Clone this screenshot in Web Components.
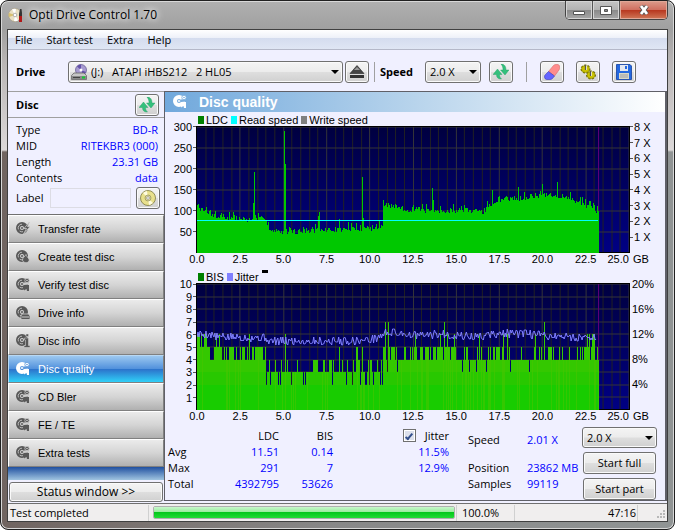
<!DOCTYPE html>
<html lang="en">
<head>
<meta charset="utf-8">
<title>Opti Drive Control 1.70</title>
<style>
    body {
        margin: 0;
        font: 11px/16px "Open Sans", "Liberation Sans", sans-serif;
        color: #000;
    }
</style>
</head>
<body>
<odc-window></odc-window>

<script>
const CONTROL_CSS = `
    *, *::before, *::after { box-sizing: border-box; }
    button, select, input { font: inherit; color: inherit; margin: 0; }
    button, select {
        border: 1px solid #707070;
        border-radius: 3px;
        background: linear-gradient(#f4f4f4, #ececec 48%, #dedede 52%, #d0d0d0);
        box-shadow: inset 0 0 0 1px #fafafa;
    }
`;

// the disc that most of the navigation icons are built on
const DISC = `<path fill="currentColor" fill-rule="evenodd" d="M7 1a6 6 0 1 0 0 12a6 6 0 1 0 0-12zM7 5a2 2 0 1 1 0 4a2 2 0 1 1 0-4z"/>
    <path fill="none" stroke="#fff" stroke-opacity=".65" stroke-width=".9" d="M3.4 8.4A3.8 3.8 0 0 1 7 3.2M4.6 10A3.8 3.8 0 0 0 8 10.7"/>
    <circle cx="7" cy="7" r="1" fill="currentColor"/>`;

const ICONS = {
    transfer: DISC + `<path fill="currentColor" stroke="var(--edge, #ccc)" stroke-width=".8" d="M14.500 1L9 7.500h2.500L8 14l7-8.500h-2.500z"/>`,
    create: DISC + `<path fill="currentColor" stroke="var(--edge, #ccc)" stroke-width=".8" d="M11 5.500c-1 2-3.500 3-3.500 5.500s5 4 6.500 1c1-2-2-3.500-3-6.500z"/>`,
    verify: DISC + `<path fill="var(--edge, #ccc)" d="M8.500 5.500L14 5v2.500l-5 .5z"/><circle cx="12" cy="3.500" r="2.200" fill="currentColor" stroke="var(--edge, #ccc)" stroke-width=".8"/><circle cx="12" cy="3.500" r=".8" fill="var(--edge, #ccc)"/>
        <path fill="currentColor" d="M9.500 8H14v6h-2l-.5-2-2.500 1.500z"/>`,
    drive: DISC + `<path fill="currentColor" stroke="var(--edge, #ccc)" stroke-width=".8" d="M7 9h6.500l1.500 2v3.500H6V11z"/><path stroke="#ccc" d="M7 12h7"/>`,
    info: DISC + `<path fill="currentColor" stroke="var(--edge, #ccc)" stroke-width=".6" d="M11 1h2.500v2.500H11zM9.500 5h4v7.500H15v2H9v-2h1.500V7h-1z"/>`,
    app: `<circle cx="7" cy="8" r="6.500" fill="#e8e0c4" stroke="#a89c80" stroke-width=".6"/>
        <path fill="#fff" d="M7 8L4 2.300A6 6 0 0 1 8 2zM7 8l3 5.500A6 6 0 0 1 6 14z"/><path fill="#d8c070" d="M7 8L1 6a6 6 0 0 0 0 4z"/>
        <circle cx="7" cy="8" r="1.800" fill="#fff" stroke="#999" stroke-width=".7"/>
        <path fill="#333" d="M12 2h1.500l.5 4v9h-3V7z"/><path fill="#b01818" d="M11 9h3v6h-3z"/>`,
    optical: `<circle cx="10" cy="6" r="5.500" fill="#a79bd0" stroke="#6c6298" stroke-width=".8"/><path fill="#6350a8" d="M10 6L6 2.500a5.500 5.500 0 0 1 4-2zM10 6l5 2a5.500 5.500 0 0 1-3 3z"/>
        <circle cx="10" cy="6" r="1.500" fill="#fff"/>
        <path fill="#c6c6c6" stroke="#666" stroke-width=".8" d="M3 9h10l2.500 2.500v4H.5v-4z"/><path fill="#8a8a8a" d="M1 12h14v3H1z"/><path fill="#444" d="M2 13h7v1H2z"/><path fill="#1c3" d="M11 12.500h3v2h-3z"/>`,
    eject: `<path fill="#444" stroke="#222" stroke-width=".6" d="M8 1.500L15 9.500H1z"/><path fill="#333" d="M1 11h14v3H1z"/><path fill="#999" d="M8 3l3 3H5z"/>`,
    refresh: `<path fill="#34c07c" stroke="#1f9a60" stroke-width=".4" d="M0 10.500L4.500 5l4.500 5.500H6.500c0 2 .5 3 2 4.500-3.500.2-5-1.500-5-4.500zM16 6l-4 5-4.500-5H10c0-2.500-.5-4-2-6 3.500 0 5 2.500 5 6z"/>`,
    eraser: `<path fill="#ff8c8c" stroke="#d86868" stroke-width=".6" d="M4.500 7.500L9.500 1.500q1-1 2.500-1h2q1.700.5 1.700 2.500T15 6l-4.500 6z"/>
        <path fill="#6464ff" stroke="#3c3cb8" stroke-width=".6" d="M4.500 7.500l6 4.500-2 2.500q-1 1-2.500 1H2.500Q.5 15 .5 13t1-2.500z"/>`,
    gears: `<g fill="#ccc400" stroke="#8a8400"><path fill="none" stroke="#6a6600" stroke-width="2" stroke-dasharray="2 1.300" d="M1.500 5a4 3.500 0 1 0 8 0a4 3.500 0 1 0-8 0zM7 11a4 3.500 0 1 0 8 0a4 3.500 0 1 0-8 0z"/>
        <ellipse cx="5.500" cy="5" rx="4" ry="3.500" stroke-width=".6"/><ellipse cx="11" cy="11" rx="4" ry="3.500" stroke-width=".6"/></g>
        <path stroke="#555" stroke-width="1.300" d="M5.500 1v5M10.500 7v5"/><path stroke="#eee" stroke-width=".8" d="M6.500 1.500v4.500M11.500 7.500V12"/>`,
    save: `<path fill="#2468e0" stroke="#1440a0" stroke-width=".8" d="M.5.5H14L15.500 2v13.500H.5z"/><path fill="#e4e8f0" d="M4 1h8v6H4z"/><path fill="#2468e0" d="M9 2h2v3H9z"/>
        <path fill="#d8d8c8" d="M3 9h10v6H3z"/><path stroke="#889" stroke-width=".7" d="M4 11h8M4 13h8"/>`,
    disc: `<circle cx="8" cy="8" r="7.500" fill="#e8e08c" stroke="#7c7840" stroke-width=".8"/><path fill="#fffce0" d="M8 8L3 3a7 7 0 0 1 4-2zM8 8l5 5a7 7 0 0 1-4 2z"/>
        <circle cx="8" cy="8" r="3" fill="#d8d4a0" stroke="#87834c" stroke-width=".6"/><circle cx="8" cy="8" r="1.300" fill="#fff" stroke="#777" stroke-width=".5"/>`,
};

class OdcIcon extends HTMLElement {
    connectedCallback() {
        const name = this.getAttribute("name");
        const size = this.getAttribute("size") || 16;
        const box = ICONS[name].startsWith(DISC) ? "1 1 14 14" : "0 0 16 16";
        this.attachShadow({ mode: "open" }).innerHTML = `
            <style>:host { display: flex; flex: none; } svg { display: block; }</style>
            <svg width="${size}" height="${size}" viewBox="${box}" aria-hidden="true">${ICONS[name]}</svg>`;
    }
}

class OdcIconButton extends HTMLElement {
    connectedCallback() {
        this.attachShadow({ mode: "open" }).innerHTML = `
            <style>
                ${CONTROL_CSS}
                :host { display: block; flex: none; width: 24px; height: 22px; }
                button { display: flex; align-items: center; justify-content: center; width: 100%; height: 100%; padding: 0; }
            </style>
            <button type="button" aria-label="${this.getAttribute("label")}"><odc-icon name="${this.getAttribute("icon")}"></odc-icon></button>`;
    }
}

class OdcSelect extends HTMLElement {
    connectedCallback() {
        const icon = this.getAttribute("icon");
        this.attachShadow({ mode: "open" }).innerHTML = `
            <style>
                ${CONTROL_CSS}
                :host { display: grid; grid-template-columns: auto 1fr auto; align-items: center; height: 22px; }
                select { grid-area: 1 / 1 / 2 / 4; width: 100%; height: 100%; appearance: none; padding: 0 16px 0 ${icon ? 22 : 4}px; }
                odc-icon { grid-area: 1 / 1; margin-left: 3px; pointer-events: none; }
                .arrow { grid-area: 1 / 3; margin-right: 4px; pointer-events: none; }
            </style>
            <select aria-label="${this.getAttribute("label")}"><option>${this.getAttribute("value")}</option></select>
            ${icon ? `<odc-icon name="${icon}"></odc-icon>` : ""}
            <svg class="arrow" width="8" height="4"><path d="M0 0h8L4 4z"/></svg>`;
    }
}

class OdcTitlebar extends HTMLElement {
    connectedCallback() {
        this.attachShadow({ mode: "open" }).innerHTML = `
            <style>
                ${CONTROL_CSS}
                :host { display: flex; flex: none; align-items: flex-start; height: 28px; }
                odc-icon { margin: 6px 5px 0 1px; }
                h1 { flex: 1; margin: 5px 0 0; font-size: 12px; line-height: 18px; font-weight: normal; text-shadow: 0 0 6px #fff, 0 0 8px #fff; }
                .buttons { display: flex; border: 1px solid #444; border-top: 0; border-radius: 0 0 5px 5px; overflow: hidden; }
                button { display: flex; align-items: center; justify-content: center; height: 18px; width: 27px; padding: 0; border: 0; border-radius: 0;
                    border-right: 1px solid #555; background: linear-gradient(#c4c4c4, #b2b2b2 48%, #8a8a8a 52%, #a8a8a8); box-shadow: inset 0 0 0 1px #d4d4d4; }
                .close { width: 47px; border-right: 0; background: linear-gradient(#dc9c8c, #d07060 48%, #b83820 52%, #d07858); box-shadow: inset 0 0 0 1px #e0a898; }
            </style>
            <odc-icon name="app"></odc-icon>
            <h1><slot></slot></h1>
            <div class="buttons">
                <button type="button" aria-label="Minimize"><svg width="14" height="12"><path fill="#fff" stroke="#555" d="M1.500 7.500h11v3h-11z"/></svg></button>
                <button type="button" aria-label="Maximize"><svg width="12" height="11"><path fill="#fff" fill-rule="evenodd" stroke="#555" d="M.5 1.500h11v8H.5zM4.500 4.500h3v2h-3z"/></svg></button>
                <button type="button" class="close" aria-label="Close"><svg width="14" height="12"><path fill="none" stroke="#555" stroke-width="4.500" d="M4 2l6 8M10 2l-6 8"/><path fill="none" stroke="#fff" stroke-width="2.800" d="M4 2l6 8M10 2l-6 8"/></svg></button>
            </div>`;
    }
}

class OdcMenubar extends HTMLElement {
    connectedCallback() {
        const items = ["File", "Start test", "Extra", "Help"];
        this.attachShadow({ mode: "open" }).innerHTML = `
            <style>
                :host { display: block; flex: none; }
                nav { display: flex; gap: 14px; height: 19px; padding: 0 7px; border-bottom: 1px solid #b4b8c8; background: linear-gradient(#fff, #eef1f9 40%, #d4dcee 42%, #dfe6f4); }
                button { border: 0; padding: 0; background: none; font: inherit; }
            </style>
            <nav>${items.map((item) => `<button type="button">${item}</button>`).join("")}</nav>`;
    }
}

class OdcToolbar extends HTMLElement {
    connectedCallback() {
        this.attachShadow({ mode: "open" }).innerHTML = `
            <style>
                :host { display: flex; flex: none; box-sizing: border-box; align-items: center; height: 41px; padding: 2px 31px 0 8px; }
                b { flex: none; }
                .drive { width: 52px; }
                .speed { width: 45px; }
                .drives { flex: 1; margin-right: 2px; }
                .speeds { width: 56px; margin-right: 8px; }
                .line { width: 1px; height: 20px; background: #a0a0a0; }
                .line.first { margin: 0 5px; }
                .line.second { margin: 0 13px; }
                .tools { display: flex; gap: 12px; }
            </style>
            <b class="drive">Drive</b>
            <odc-select class="drives" icon="optical" label="Drive" value="(J:)&nbsp;&nbsp; ATAPI iHBS212&nbsp;&nbsp; 2 HL05"></odc-select>
            <odc-icon-button icon="eject" label="Eject"></odc-icon-button>
            <span class="line first"></span>
            <b class="speed">Speed</b>
            <odc-select class="speeds" label="Speed" value="2.0 X"></odc-select>
            <odc-icon-button icon="refresh" label="Refresh drive"></odc-icon-button>
            <span class="line second"></span>
            <div class="tools">
                <odc-icon-button icon="eraser" label="Erase"></odc-icon-button>
                <odc-icon-button icon="gears" label="Options"></odc-icon-button>
                <odc-icon-button icon="save" label="Save"></odc-icon-button>
            </div>`;
    }
}

class OdcDiscInfo extends HTMLElement {
    connectedCallback() {
        const rows = [["Type", "BD-R"], ["MID", "RITEKBR3 (000)"], ["Length", "23.31 GB"], ["Contents", "data"]];
        this.attachShadow({ mode: "open" }).innerHTML = `
            <style>
                ${CONTROL_CSS}
                :host { display: block; }
                header { display: flex; align-items: center; justify-content: space-between; height: 27px; padding: 0 5px 0 8px;
                    border-top: 1px solid #a0a0a0; border-bottom: 1px solid #a0a0a0; }
                h2 { margin: 0; font-size: 11px; }
                dl { margin: 4px 6px 0 8px; }
                dl div { display: flex; justify-content: space-between; height: 16px; }
                dd { margin: 0; color: #00f; }
                .label { display: flex; align-items: center; gap: 5px; padding: 1px 4px 5px 8px; }
                .label label { width: 29px; }
                input { flex: 1; min-width: 0; height: 20px; border: 1px solid #dcdce4; background: #f0f0ff; }
            </style>
            <header><h2>Disc</h2><odc-icon-button icon="refresh" label="Refresh disc"></odc-icon-button></header>
            <dl>${rows.map(([name, value]) => `<div><dt>${name}</dt><dd>${value}</dd></div>`).join("")}</dl>
            <div class="label"><label for="label">Label</label><input id="label" type="text"><odc-icon-button icon="disc" label="Read label"></odc-icon-button></div>`;
    }
}

class OdcNav extends HTMLElement {
    connectedCallback() {
        const items = [
            ["transfer", "Transfer rate"], ["create", "Create test disc"], ["verify", "Verify test disc"],
            ["drive", "Drive info"], ["info", "Disc info"], ["verify", "Disc quality"],
            ["verify", "CD Bler"], ["verify", "FE / TE"], ["verify", "Extra tests"],
        ];
        this.attachShadow({ mode: "open" }).innerHTML = `
            <style>
                :host { display: flex; flex-direction: column; flex: 1; border-top: 1px solid #707070; }
                nav { display: flex; flex-direction: column; }
                button { display: flex; align-items: center; gap: 8px; height: 28px; padding: 0 7px; border: 1px solid; border-color: #fff #808080 #808080 #fff;
                    background: linear-gradient(#ebebeb, #d4d4d4 50%, #b0b0b0); font: 11px "Liberation Sans", sans-serif; color: #000; }
                odc-icon { color: #585858; }
                .on { background: linear-gradient(#9cc8f0, #5090dc 50%, #2c74cc 52%, #30d0f8); color: #fff; border-color: #b8d8f4 #808080 #808080 #b8d8f4; }
                .on odc-icon { color: #fff; --edge: #5c98dc; }
                .fill { flex: 1; background: linear-gradient(#2050a0, #a0c4e0); }
            </style>
            <nav>${items.map(([icon, text]) => `<button type="button"${text === "Disc quality" ? ' class="on"' : ""}><odc-icon name="${icon}" size="14"></odc-icon>${text}</button>`).join("")}</nav>
            <div class="fill"></div>`;
    }
}

const PLOT_WIDTH = 433;
const PLOT_HEIGHT = 126;
const LAST_X = 403;

function randomSource(seed) {
    return () => {
        seed = (seed * 1664525 + 1013904223) % 4294967296;
        return seed / 4294967296;
    };
}

function interpolate(points, x) {
    let i = 1;
    while (i < points.length - 1 && points[i][0] < x) i++;
    const [x0, y0] = points[i - 1];
    const [x1, y1] = points[i];
    return y0 + (y1 - y0) * (x - x0) / (x1 - x0);
}

function bars(values, max, limit = Infinity) {
    return values.map((value, x) => {
        const height = Math.round(Math.min(value, limit) / max * PLOT_HEIGHT);
        return `M${x} ${PLOT_HEIGHT}v-${height}h1v${height}z`;
    }).join("");
}

function ldcValues() {
    const random = randomSource(7);
    const base = [[0, 104], [12, 96], [20, 86], [40, 82], [55, 78], [69, 83], [71, 62], [74, 52], [100, 50], [120, 54], [185, 60],
        [186, 114], [198, 112], [210, 101], [222, 104], [240, 98], [265, 102], [287, 98], [295, 116], [302, 127], [322, 130],
        [345, 138], [365, 135], [385, 121], [395, 106], [403, 94]];
    const spikes = { 0: 115, 56: 118, 57: 192, 87: 291, 88: 213, 121: 88, 122: 98, 142: 80, 165: 182, 166: 84, 186: 127,
        236: 155, 237: 126, 296: 150, 322: 157, 346: 164, 361: 169 };
    const values = [];
    for (let x = 0; x < LAST_X; x++) {
        const noise = random() * 12 - 6 + (random() > 0.85 ? 11 : 0);
        values.push(spikes[x] || interpolate(base, x) + noise);
    }
    return values;
}

function bisValues() {
    const random = randomSource(31);
    // [end, usual level, chance of one above, of two above, of one below]
    const parts = [[13, 5, 0.5, 0, 0], [17, 4, 0, 0, 0], [25, 5, 0.3, 0, 0], [56, 4, 0.45, 0, 0], [69, 5, 0, 0, 0.25], [186, 3, 0.25, 0, 0.1],
        [226, 4, 0.45, 0.04, 0.03], [259, 4, 0.5, 0.1, 0.06], [297, 4, 0.18, 0.02, 0.15], [305, 5, 0.3, 0, 0.2], [380, 4, 0.22, 0.07, 0.06], [403, 4, 0.4, 0.15, 0.03]];
    const spikes = { 52: 6, 88: 6, 142: 5, 159: 5, 160: 5, 165: 5, 186: 5, 187: 5, 188: 7, 191: 7, 248: 7, 348: 7, 402: 4 };
    const values = [];
    for (let x = 0; x < LAST_X; x++) {
        const [, level, up, twoUp, down] = parts.find(([end]) => x < end);
        const roll = random();
        let value = level;
        if (roll < twoUp) value += 2;
        else if (roll < twoUp + up) value += 1;
        else if (roll > 1 - down) value -= 1;
        values.push(spikes[x] || value);
    }
    return values;
}

function jitterPath() {
    const random = randomSource(5);
    const base = [[0, 6], [14, 6], [20, 5.8], [69, 5.75], [73, 5.45], [165, 5.5], [180, 5.7], [190, 6.15], [205, 6.1], [220, 5.9], [245, 6], [280, 5.8],
        [300, 6.05], [325, 6.05], [345, 5.95], [380, 5.75], [400, 5.85]];
    let path = "";
    for (let x = 0; x <= 400; x++) {
        const value = interpolate(base, x) + (random() - 0.5) * 0.7;
        path += `${x ? "L" : "M"}${x} ${Math.round(PLOT_HEIGHT - value / 10 * PLOT_HEIGHT)}`;
    }
    return path;
}

function stripes(values) {
    const random = randomSource(11);
    return values.map((value, x) => random() > 0.8 ? `M${x} ${PLOT_HEIGHT}v-${Math.round(value / 10 * PLOT_HEIGHT)}h1V${PLOT_HEIGHT}z` : "").join("");
}

function gridLines(rows) {
    let minor = "";
    let major = "";
    for (let i = 1; i <= 50; i++) {
        const line = `M${Math.round(i * PLOT_WIDTH / 50)} 0v${PLOT_HEIGHT}`;
        if (i % 5) minor += line;
        else major += line;
    }
    for (let i = 0; i < rows; i++) major += `M0 ${Math.round(i * PLOT_HEIGHT / rows)}h${PLOT_WIDTH}`;
    return `<path stroke="#202024" d="${minor}"/><path stroke="#343438" d="${major}"/>`;
}

// left and right are comma separated axis labels, top to bottom; the zero line has none
class OdcChart extends HTMLElement {
    connectedCallback() {
        const left = this.getAttribute("left").split(",");
        const right = this.getAttribute("right").split(",");
        const gb = ["0.0", "2.5", "5.0", "7.5", "10.0", "12.5", "15.0", "17.5", "20.0", "22.5"];
        const labels = (list) => list.map((text) => `<span>${text}</span>`).join("");
        this.attachShadow({ mode: "open" }).innerHTML = `
            <style>
                :host { display: grid; grid-template-columns: 31px 1fr 35px; font: 11px/12px "Liberation Sans", sans-serif; }
                .legend { grid-column: 2 / 4; display: flex; align-items: center; gap: 3px; height: 13px; padding-left: 2px; }
                .axis { display: flex; flex-direction: column; height: 126px; }
                .axis span { flex: 1; display: flex; align-items: center; gap: 1px; }
                .axis.left span { justify-content: flex-end; }
                .left span::after, .right.ticks span::before { content: ""; width: 3px; height: 1px; background: #555; }
                .right:not(.ticks) span { padding-left: 2px; }
                .plot { border: 1px solid #000; border-bottom: 0; }
                .plot svg { display: block; width: 100%; height: 126px; shape-rendering: crispEdges; }
                .gb { grid-column: 2; display: flex; justify-content: space-between; height: 14px; padding: 0 1px; }
                .gb span { display: flex; justify-content: center; width: 0; white-space: nowrap; }
                .gb .end { justify-content: flex-end; }
                .unit { padding-left: 3px; }
            </style>
            <div class="legend"><slot></slot></div>
            <div class="axis left" style="margin-top: -${Math.round(63 / left.length) - 1}px">${labels(left)}</div>
            <div class="plot">${this.plot()}</div>
            <div class="axis right${right.length > 5 ? " ticks" : ""}" style="margin-top: -${Math.round(63 / right.length) - 1}px">${labels(right)}</div>
            <div class="gb">${labels(gb)}<span class="end">25.0</span></div>
            <div class="unit">GB</div>`;
    }
    plot() {
        const rows = this.getAttribute("left").split(",").length;
        return `<svg viewBox="0 0 ${PLOT_WIDTH} ${PLOT_HEIGHT}" preserveAspectRatio="none">
            <defs><linearGradient id="bg" x2="0" y2="1"><stop stop-color="#000040"/><stop offset="1" stop-color="#000084"/></linearGradient></defs>
            <rect width="${PLOT_WIDTH}" height="${PLOT_HEIGHT}" fill="url(#bg)"/>
            ${gridLines(rows)}
            <path stroke="#000" d="M0 125.500h${PLOT_WIDTH}"/>
            <path stroke="#600078" d="M402.500 0v${PLOT_HEIGHT}"/>
            ${this.getAttribute("series") === "ldc" ? this.ldc() : this.bis()}
        </svg>`;
    }
    ldc() {
        return `<path fill="#00c800" d="${bars(ldcValues(), 300)}"/><path stroke="#0ff" d="M0 93.500h402"/>`;
    }
    bis() {
        const values = bisValues();
        return `<path fill="#34c800" d="${bars(values, 10)}"/>
            <path fill="#28c800" d="${bars(values, 10, 3)}"/>
            <path fill="#18cc00" d="${bars(values, 10, 2)}"/>
            <path fill="#48c400" fill-opacity=".6" d="${stripes(values)}"/>
            <path fill="none" stroke="#8080ff" d="${jitterPath()}"/>`;
    }
}

class OdcLegend extends HTMLElement {
    connectedCallback() {
        this.attachShadow({ mode: "open" }).innerHTML = `
            <style>
                :host { display: flex; align-items: center; gap: 2px; }
                i { width: 6px; height: 8px; background: ${this.getAttribute("color")}; }
            </style>
            <i></i><slot></slot>`;
    }
}

class OdcResults extends HTMLElement {
    connectedCallback() {
        this.attachShadow({ mode: "open" }).innerHTML = `
            <style>
                ${CONTROL_CSS}
                :host { display: flex; padding: 3px 8px 0 3px; }
                table { align-self: flex-start; border-collapse: collapse; table-layout: fixed; width: 281px; }
                th, td { padding: 0; height: 16px; font-weight: normal; text-align: right; }
                thead th { height: 17px; }
                tbody th { text-align: left; }
                td, dd { color: #00f; }
                .check { display: flex; align-items: center; justify-content: flex-end; gap: 9px; }
                input { appearance: none; width: 13px; height: 13px; border: 1px solid #707070; box-shadow: inset 0 0 0 1px #fff;
                    background: #dce0ec; display: grid; place-items: center; }
                input:checked::before { content: ""; width: 4px; height: 8px; border: solid #34508c; border-width: 0 2px 2px 0; transform: rotate(40deg); }
                dl { display: grid; grid-template: 28px 16px 16px / 59px auto; margin: 5px 0 0 19px; }
                dd { margin: 0; white-space: nowrap; }
                .actions { display: flex; flex-direction: column; gap: 4px; width: 75px; margin-left: auto; }
                .actions button { height: 22px; margin: 0 1px; padding: 0; }
                .actions odc-select { height: 21px; }
            </style>
            <table>
                <colgroup><col style="width: 50px"><col style="width: 61px"><col style="width: 54px"><col></colgroup>
                <thead><tr><td></td><th scope="col">LDC</th><th scope="col">BIS</th><th scope="col"><span class="check"><input id="jitter" type="checkbox" checked><label for="jitter">Jitter</label></span></th></tr></thead>
                <tbody>
                    <tr><th scope="row">Avg</th><td>11.51</td><td>0.14</td><td>11.5%</td></tr>
                    <tr><th scope="row">Max</th><td>291</td><td>7</td><td>12.9%</td></tr>
                    <tr><th scope="row">Total</th><td>4392795</td><td>53626</td><td></td></tr>
                </tbody>
            </table>
            <dl><dt>Speed</dt><dd>2.01 X</dd><dt>Position</dt><dd>23862 MB</dd><dt>Samples</dt><dd>99119</dd></dl>
            <div class="actions">
                <odc-select label="Test speed" value="2.0 X"></odc-select>
                <button type="button">Start full</button>
                <button type="button">Start part</button>
            </div>`;
    }
}

class OdcQualityPanel extends HTMLElement {
    connectedCallback() {
        this.attachShadow({ mode: "open" }).innerHTML = `
            <style>
                :host { display: flex; flex-direction: column; flex: 1; min-width: 0; margin-bottom: 2px; border: 1px solid #606068; border-right-width: 2px; }
                header { display: flex; align-items: center; gap: 12px; height: 20px; padding-left: 8px; background: linear-gradient(90deg, #70a8dc, #b8d4ec 50%, #fff); color: #fff; }
                header odc-icon { --edge: #78acdc; }
                h2 { margin: 0; font: bold 14px/20px "Liberation Sans", sans-serif; }
                .mark { align-self: flex-start; width: 6px; height: 3px; background: #000; }
                odc-chart { margin-top: 1px; }
                odc-chart + odc-chart { margin-top: 3px; }
            </style>
            <header><odc-icon name="verify" size="14"></odc-icon><h2>Disc quality</h2></header>
            <odc-chart series="ldc" left="300,250,200,150,100,50" right="8 X,7 X,6 X,5 X,4 X,3 X,2 X,1 X">
                <odc-legend color="#008000">LDC</odc-legend><odc-legend color="#00ffff">Read speed</odc-legend><odc-legend color="#808080">Write speed</odc-legend>
            </odc-chart>
            <odc-chart series="bis" left="10,9,8,7,6,5,4,3,2,1" right="20%,16%,12%,8%,4%">
                <odc-legend color="#008000">BIS</odc-legend><odc-legend color="#8080ff">Jitter</odc-legend><span class="mark"></span>
            </odc-chart>
            <odc-results></odc-results>`;
    }
}

class OdcStatusbar extends HTMLElement {
    connectedCallback() {
        this.attachShadow({ mode: "open" }).innerHTML = `
            <style>
                :host { display: flex; flex: none; box-sizing: border-box; align-items: center; height: 18px; padding-left: 2px; border-top: 1px solid #707070; background: #f0eeee; }
                .state { width: 138px; border-right: 1px solid #d0d0d0; }
                progress { flex: 1; min-width: 0; appearance: none; height: 13px; margin: 0 1px 0 4px; border: 1px solid #b0b0b0; border-radius: 2px; overflow: hidden; }
                progress::-webkit-progress-bar { background: #e0e0e0; }
                progress::-webkit-progress-value { background: linear-gradient(#c8f8cc, #98ec9c 45%, #04c81c 50%, #20dc34); }
                .cell { border-left: 1px solid #d0d0d0; padding-left: 5px; }
                .percent { width: 52px; }
                .time { width: 116px; text-align: right; padding-right: 1px; border-right: 1px solid #d0d0d0; }
                svg { align-self: flex-end; margin: 0 1px 1px 18px; }
            </style>
            <span class="state">Test completed</span>
            <progress max="100" value="100" aria-label="Test progress"></progress>
            <span class="cell percent">100.0%</span>
            <span class="cell time">47:16</span>
            <svg width="10" height="10" fill="#b8b8b8"><path d="M7 0h2v2H7zM7 3h2v2H7zM4 3h2v2H4zM7 6h2v2H7zM4 6h2v2H4zM1 6h2v2H1z"/></svg>`;
    }
}

class OdcWindow extends HTMLElement {
    connectedCallback() {
        this.attachShadow({ mode: "open" }).innerHTML = `
            <style>
                ${CONTROL_CSS}
                :host { display: flex; flex-direction: column; box-sizing: border-box; min-height: 100vh; padding: 0 6px 7px; border: 1px solid #202020; border-radius: 8px;
                    box-shadow: inset 0 0 0 1px #d8d8d8;
                    background: linear-gradient(#b0b0b0, #a0a0a0 28px, #b8b4b4 60px, #dcd8d8 149px, transparent 151px), linear-gradient(90deg, #706460, #888 50%, #909494); }
                .client { display: flex; flex-direction: column; flex: 1 0 auto; border: 1px solid #404040; background: #f0f0ff; }
                .body { display: flex; flex: 1 0 auto; }
                aside { display: flex; flex-direction: column; flex: none; width: 156px; }
                .status { height: 20px; margin: 2px 1px 1px; padding: 0; font-size: 12px; line-height: 16px; }
            </style>
            <odc-titlebar>Opti Drive Control 1.70</odc-titlebar>
            <div class="client">
                <odc-menubar></odc-menubar>
                <odc-toolbar></odc-toolbar>
                <div class="body">
                    <aside>
                        <odc-disc-info></odc-disc-info>
                        <odc-nav></odc-nav>
                        <button type="button" class="status">Status window &gt;&gt;</button>
                    </aside>
                    <odc-quality-panel></odc-quality-panel>
                </div>
                <odc-statusbar></odc-statusbar>
            </div>`;
    }
}

customElements.define("odc-icon", OdcIcon);
customElements.define("odc-icon-button", OdcIconButton);
customElements.define("odc-select", OdcSelect);
customElements.define("odc-titlebar", OdcTitlebar);
customElements.define("odc-menubar", OdcMenubar);
customElements.define("odc-toolbar", OdcToolbar);
customElements.define("odc-disc-info", OdcDiscInfo);
customElements.define("odc-nav", OdcNav);
customElements.define("odc-chart", OdcChart);
customElements.define("odc-legend", OdcLegend);
customElements.define("odc-results", OdcResults);
customElements.define("odc-quality-panel", OdcQualityPanel);
customElements.define("odc-statusbar", OdcStatusbar);
customElements.define("odc-window", OdcWindow);
</script>
</body>
</html>
